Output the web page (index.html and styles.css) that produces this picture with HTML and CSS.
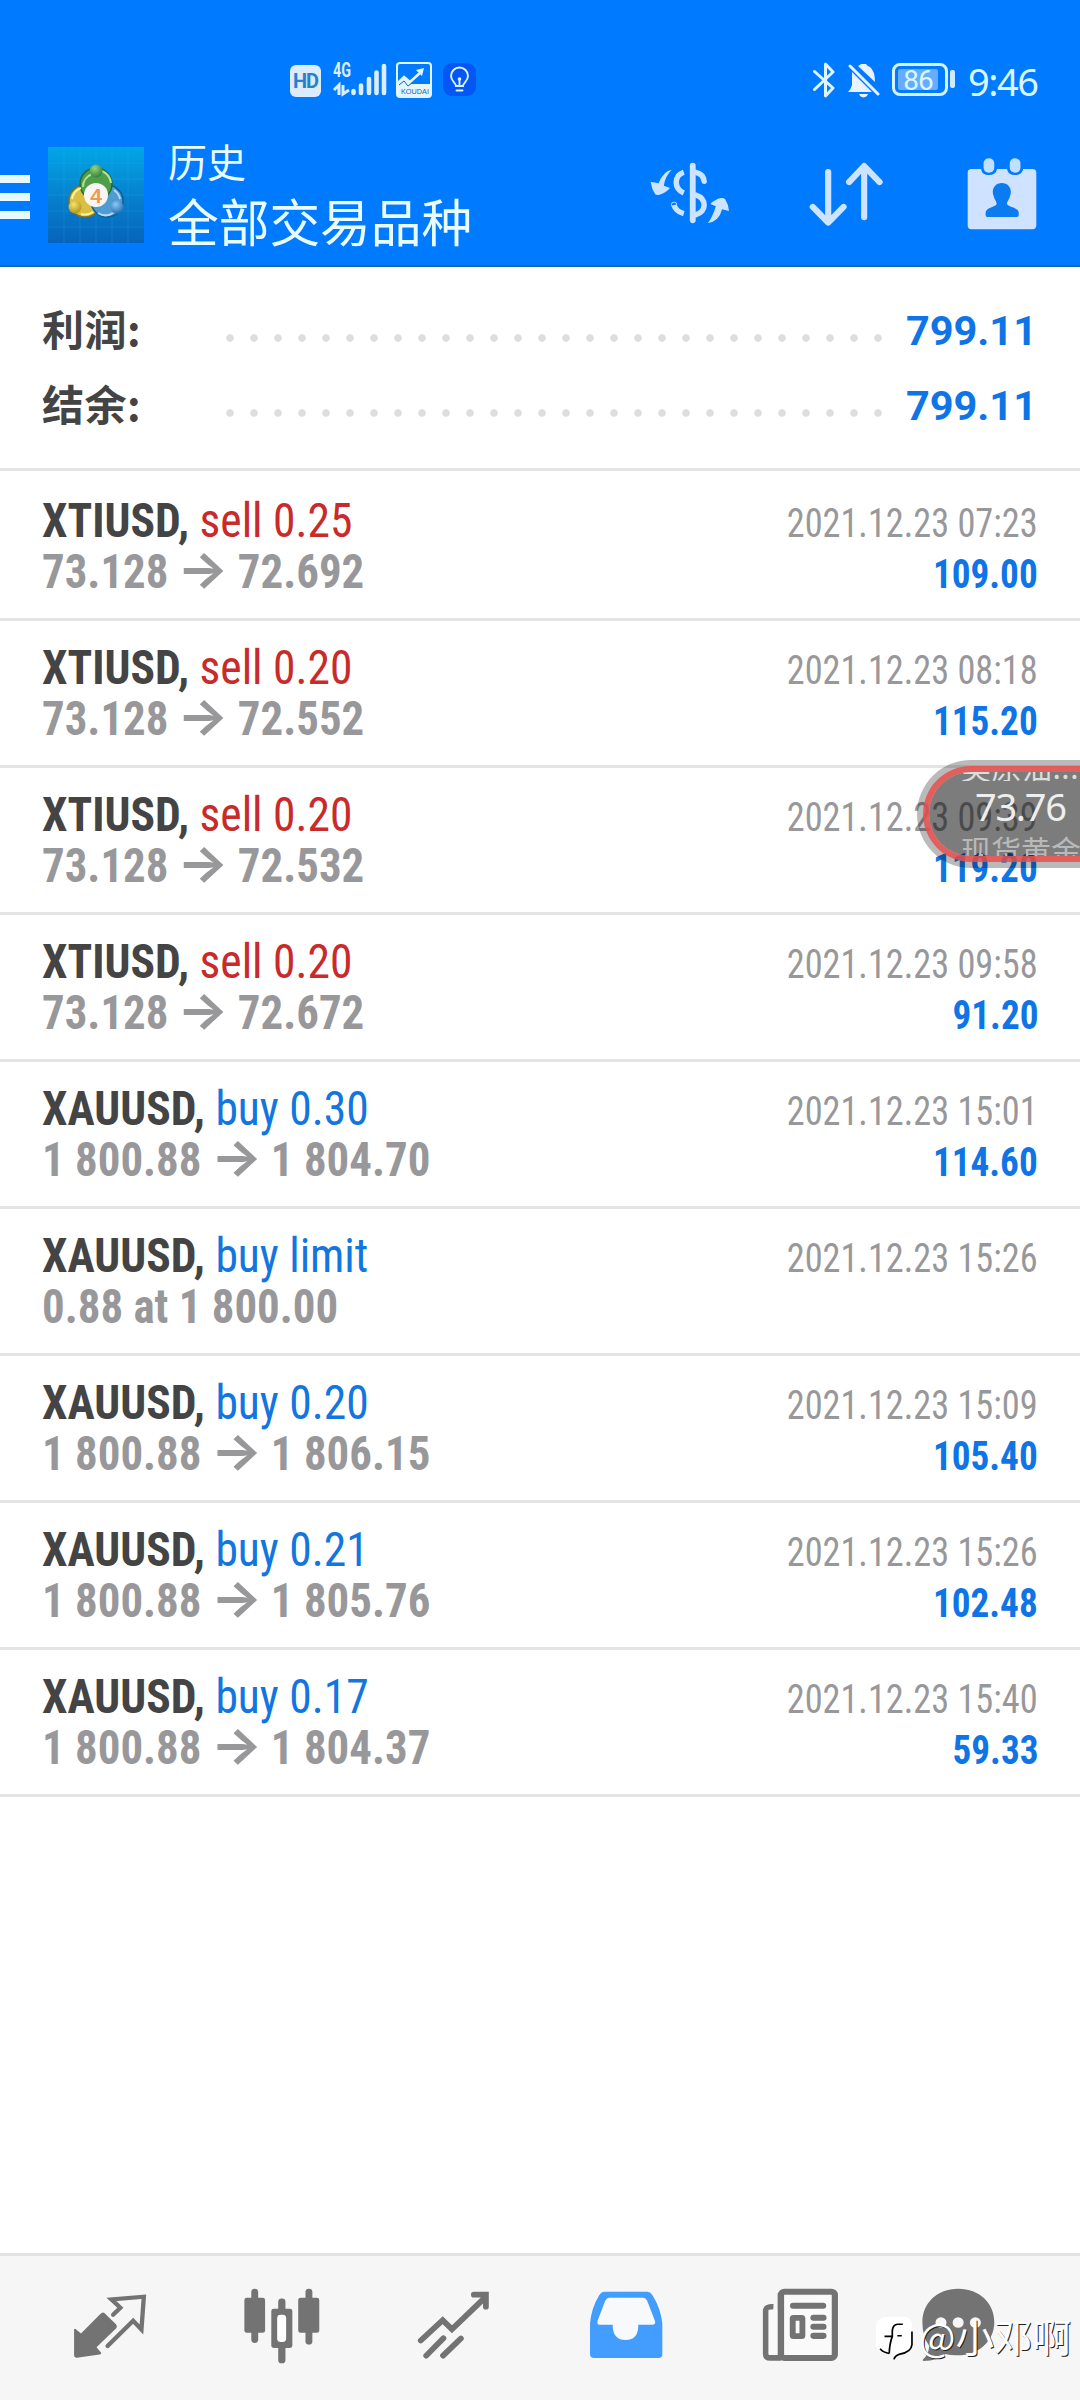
FILE: index.html
```html
<!DOCTYPE html>
<html lang="zh-CN">
<head>
<meta charset="utf-8">
<title>历史</title>
<link rel="stylesheet" href="styles.css">
</head>
<body>
<div class="screen">
  <header class="header">
    <div class="status">
      <div class="status-left">
        <span class="hd">HD</span>
        <svg class="signal" viewBox="0 0 54 34" width="54" height="34">
          <text x="0" y="15" textLength="18" lengthAdjust="spacingAndGlyphs" class="net">4G</text>
          <path d="M1 28 L6 23 V33 M10 23 V32 L16 28" fill="none" stroke="#d9efff" stroke-width="3"/>
          <path d="M20.5 29v2M28 23.500v7.500M36 17v14M43.500 10.500v20.500M51 4v27" stroke="#d9efff" stroke-width="4.600" stroke-linecap="round" fill="none"/>
        </svg>
        <svg class="koudai" viewBox="0 0 36 36" width="36" height="36">
          <rect x="1" y="1" width="34" height="34" rx="3" fill="none" stroke="#e3f6ff" stroke-width="2"/>
          <path d="M1 22 L8 15 L15 22 H35 V35 H1Z" fill="#e3f6ff"/>
          <path d="M2 21 L8 15 L14 20 L25 10" fill="none" stroke="#e3f6ff" stroke-width="2.600"/>
          <path d="M20 8 L28 6 L26 14Z" fill="#e3f6ff"/>
          <path d="M3 23 L8 19 L12 24 L16 21" fill="none" stroke="#0a66c8" stroke-width="1"/>
          <text x="5" y="32" textLength="28" lengthAdjust="spacingAndGlyphs" class="kd">KOUDAI</text>
        </svg>
        <svg class="bulb" viewBox="0 0 33 33" width="33" height="33">
          <rect width="33" height="33" rx="9" fill="#0457f5"/>
          <path d="M13 23c0-3-5-5-5-10a8.500 8.500 0 0 1 17 0c0 5-5 7-5 10zM13.500 27.500h6M16.500 22v-6" fill="none" stroke="#d9f4ff" stroke-width="1.900" stroke-linecap="round"/>
          <circle cx="16.500" cy="16" r="1.800" fill="#d9f4ff"/>
        </svg>
      </div>
      <div class="status-right">
        <svg viewBox="0 0 22 36" width="22" height="36" class="bt"><path d="M1.500 9.500 L20 26 L12.500 34 V2 L20 10 L1.500 27.500" fill="none" stroke="#dcf5ff" stroke-width="3" stroke-linejoin="round" stroke-linecap="round"/></svg>
        <svg viewBox="0 0 32 35" width="32" height="35" class="bell">
          <path d="M10 3 Q12 2 13 1 H18 Q19 3 22 4 Q27 8 27 19 Z M4 9 L24 29 H0 Q3 26 4 22Z M11 31 H20 Q19 34 15.500 34.500 Q12 34 11 31Z" fill="#e8f3ff"/>
          <path d="M2 3 L30 31" stroke="#e8f3ff" stroke-width="3" stroke-linecap="round"/>
        </svg>
        <div class="battery"><span>86</span></div>
        <i class="cap"></i>
        <span class="clock">9:46</span>
      </div>
    </div>
    <div class="appbar">
      <div class="menu"><i></i><i></i><i></i></div>
      <svg class="logo" viewBox="0 0 96 96" width="96" height="96">
        <defs>
          <linearGradient id="bg" x1="0" y1="0" x2="0" y2="1"><stop offset="0" stop-color="#02a6e8"/><stop offset=".5" stop-color="#0682cd"/><stop offset="1" stop-color="#0664ba"/></linearGradient>
          <radialGradient id="gr" cx=".4" cy=".3" r=".8"><stop offset="0" stop-color="#9bd37c"/><stop offset="1" stop-color="#1f7a34"/></radialGradient>
          <radialGradient id="ye" cx=".4" cy=".3" r=".8"><stop offset="0" stop-color="#f6e36b"/><stop offset="1" stop-color="#a98a14"/></radialGradient>
          <radialGradient id="bl" cx=".4" cy=".3" r=".8"><stop offset="0" stop-color="#8fc9f2"/><stop offset="1" stop-color="#1668ae"/></radialGradient>
        </defs>
        <rect width="96" height="96" fill="url(#bg)"/>
        <path d="M16 0v96M32 0v96M48 0v96M64 0v96M80 0v96M0 16h96M0 32h96M0 48h96M0 64h96M0 80h96" stroke="#35b6ee" stroke-opacity=".2" stroke-width="1"/>
        <circle cx="37" cy="54" r="16" fill="#d9c043" stroke="#7d7421" stroke-width="1.500"/>
        <circle cx="59" cy="54" r="16" fill="#4f9bd4" stroke="#0e5b96" stroke-width="1.500"/>
        <circle cx="48" cy="37" r="16" fill="#4f9e4a" stroke="#226a33" stroke-width="1.500"/>
        <path d="M35 40a14 14 0 0 1 9-13M63 36a15 15 0 0 0-9-12" fill="none" stroke="#b5e09a" stroke-width="2"/>
        <path d="M24 52a14 14 0 0 1 9-11M33 67a14 14 0 0 0 12-2" fill="none" stroke="#fbf2a4" stroke-width="2"/>
        <path d="M50 66a14 14 0 0 0 15 0M72 52a14 14 0 0 0-6-9" fill="none" stroke="#b4dcf8" stroke-width="2"/>
        <circle cx="48" cy="24" r="6.500" fill="url(#gr)"/>
        <circle cx="27" cy="60" r="6.500" fill="url(#ye)"/>
        <circle cx="69" cy="60" r="6.500" fill="url(#bl)"/>
        <circle cx="48" cy="48" r="12" fill="#f8f6f4"/>
        <text x="48" y="55.500" text-anchor="middle" class="four">4</text>
      </svg>
      <div class="titles">
        <div class="small-title">历史</div>
        <div class="big-title">全部交易品种</div>
      </div>
      <div class="actions">
        <svg class="dollar" viewBox="320 366 232 186" preserveAspectRatio="none" width="80" height="62">
          <g fill="none" stroke="#cce4ff" stroke-linecap="round">
            <path d="M444 377V541" stroke-width="17"/>
            <path d="M453 397Q475 402 477 424M453 465Q477 473 477 496Q476 516 453 524" stroke-width="16"/>
            <path d="M418 397Q396 404 396 428Q397 450 418 459M390 495Q394 514 418 521" stroke-width="16" stroke-linecap="butt"/>
            <circle cx="390" cy="494" r="1" stroke-width="15"/>
          </g>
          <path d="M383 390Q360 391 345 430Q334 427 322 426Q325 448 335 463Q340 466 347 464Q365 460 378 444L360 437Q364 408 383 390ZM488 549Q502 530 511 499L495 492Q508 478 526 474Q534 473 538 478Q548 494 549 513L529 508Q520 545 488 549Z" fill="#cce4ff"/>
        </svg>
        <svg class="sort" viewBox="780 366 216 194" preserveAspectRatio="none" width="74" height="65"><path d="M836 396V545M791 500L836 547L881 500M941 531V380M897 426L941 378L986 426" fill="none" stroke="#cce4ff" stroke-width="18" stroke-linecap="round" stroke-linejoin="round"/></svg>
        <svg class="calendar" viewBox="1240 354 203 216" preserveAspectRatio="none" width="70" height="72">
          <path d="M1253 387H1281Q1283 405 1303 405Q1324 405 1327 387H1356Q1359 405 1379 405Q1400 405 1403 387H1430Q1441 387 1441 398V556Q1441 568 1430 568H1253Q1242 568 1242 556V398Q1242 387 1253 387Z" fill="#cfe2ff"/>
          <rect x="1288" y="355" width="31" height="43" rx="15" fill="#bfe0ff"/><rect x="1364" y="355" width="31" height="43" rx="15" fill="#bfe0ff"/>
          <path d="M1341 429C1362 429 1372 450 1365 467C1362 480 1356 483 1356 492C1357 501 1390 501 1390 519V526Q1390 531 1384 531H1299Q1294 531 1294 526V519C1294 501 1326 501 1326 492C1326 483 1320 480 1317 467C1310 450 1320 429 1341 429Z" fill="#0b7bf2"/>
        </svg>
      </div>
    </div>
  </header>

  <section class="summary">
    <div class="sum-row"><span class="label">利润:</span><span class="dots"></span><span class="total">799.11</span></div>
    <div class="sum-row"><span class="label">结余:</span><span class="dots"></span><span class="total">799.11</span></div>
  </section>

  <main class="deals">
    <article class="deal"><div class="line"><span class="sym">XTIUSD, <b class="sell">sell 0.25</b></span><span class="date">2021.12.23 07:23</span></div><div class="line"><span class="price">73.128 <i class="arrow">→</i> 72.692</span><span class="profit">109.00</span></div></article>
    <article class="deal"><div class="line"><span class="sym">XTIUSD, <b class="sell">sell 0.20</b></span><span class="date">2021.12.23 08:18</span></div><div class="line"><span class="price">73.128 <i class="arrow">→</i> 72.552</span><span class="profit">115.20</span></div></article>
    <article class="deal"><div class="line"><span class="sym">XTIUSD, <b class="sell">sell 0.20</b></span><span class="date">2021.12.23 09:39</span></div><div class="line"><span class="price">73.128 <i class="arrow">→</i> 72.532</span><span class="profit">119.20</span></div></article>
    <article class="deal"><div class="line"><span class="sym">XTIUSD, <b class="sell">sell 0.20</b></span><span class="date">2021.12.23 09:58</span></div><div class="line"><span class="price">73.128 <i class="arrow">→</i> 72.672</span><span class="profit">91.20</span></div></article>
    <article class="deal"><div class="line"><span class="sym">XAUUSD, <b class="buy">buy 0.30</b></span><span class="date">2021.12.23 15:01</span></div><div class="line"><span class="price">1 800.88 <i class="arrow">→</i> 1 804.70</span><span class="profit">114.60</span></div></article>
    <article class="deal"><div class="line"><span class="sym">XAUUSD, <b class="buy">buy limit</b></span><span class="date">2021.12.23 15:26</span></div><div class="line"><span class="price">0.88 at 1 800.00</span></div></article>
    <article class="deal"><div class="line"><span class="sym">XAUUSD, <b class="buy">buy 0.20</b></span><span class="date">2021.12.23 15:09</span></div><div class="line"><span class="price">1 800.88 <i class="arrow">→</i> 1 806.15</span><span class="profit">105.40</span></div></article>
    <article class="deal"><div class="line"><span class="sym">XAUUSD, <b class="buy">buy 0.21</b></span><span class="date">2021.12.23 15:26</span></div><div class="line"><span class="price">1 800.88 <i class="arrow">→</i> 1 805.76</span><span class="profit">102.48</span></div></article>
    <article class="deal"><div class="line"><span class="sym">XAUUSD, <b class="buy">buy 0.17</b></span><span class="date">2021.12.23 15:40</span></div><div class="line"><span class="price">1 800.88 <i class="arrow">→</i> 1 804.37</span><span class="profit">59.33</span></div></article>
  </main>

  <nav class="tabs">
    <svg viewBox="210 145 220 230" preserveAspectRatio="none" width="76" height="77">
      <path d="M299 218Q303 218 306 222L338 254Q342 260 338 265L281 322L295 339Q294 343 290 344L224 353Q216 354 216 346V268Q218 265 223 270L236 281L292 223Q296 218 299 218Z" fill="#737373"/>
      <path d="M329 225L350 204L324 179L418 171L411 269L387 243L313 318" fill="none" stroke="#737373" stroke-width="12.500" stroke-linecap="round"/>
    </svg>
    <svg viewBox="705 145 226 230" preserveAspectRatio="none" width="78" height="77">
      <g fill="#737373"><rect x="709" y="174" width="60" height="105" rx="7"/><rect x="729" y="147" width="20" height="162" rx="10"/><rect x="865" y="174" width="61" height="105" rx="7"/><rect x="886" y="147" width="20" height="167" rx="10"/><rect x="787" y="207" width="61" height="117" rx="7"/><rect x="807" y="176" width="21" height="194" rx="10"/></g><rect x="804" y="225" width="26" height="81" rx="10" fill="#fff"/>
    </svg>
    <svg viewBox="1210 145 213 230" preserveAspectRatio="none" width="73" height="77">
      <path d="M1221 302L1285 241L1312 268L1409 173M1376 165H1411V201M1237 347L1287 295M1286 347L1338 296" fill="none" stroke="#737373" stroke-width="17" stroke-linecap="round"/>
    </svg>
    <svg viewBox="144 145 215 230" preserveAspectRatio="none" width="74" height="77">
      <path d="M190 156H314Q322 156 328 166Q352 205 357 250V344Q357 354 345 354H159Q147 354 147 344V250Q151 205 174 166Q180 156 190 156Z" fill="#429dff"/>
      <path d="M203 174H301Q309 174 313 183L336 244Q338 254 328 255H287V262Q285 300 250 300Q216 300 213 262V255H175Q166 255 169 243L191 183Q195 174 203 174Z" fill="#f7f9fb"/>
    </svg>
    <svg viewBox="644 145 223 230" preserveAspectRatio="none" width="77" height="77">
      <rect x="699" y="156" width="156" height="198" rx="10" fill="#fafafa" stroke="#737373" stroke-width="18"/>
      <path d="M677 201Q655 200 655 214V342Q655 354 668 354H700" fill="none" stroke="#737373" stroke-width="17"/><rect x="663" y="210" width="27" height="134" fill="#fafafa"/>
      <path d="M734 198H821M793 234H822M793 261H822M793 288H822" fill="none" stroke="#737373" stroke-width="18" stroke-linecap="round"/>
      <rect x="733" y="234" width="28" height="55" rx="2" fill="#fafafa" stroke="#737373" stroke-width="17"/>
      <path d="M698 160V350" stroke="#737373" stroke-width="17"/>
    </svg>
    <svg viewBox="1105 145 215 230" preserveAspectRatio="none" width="74" height="77">
      <path d="M1213 147C1275 147 1318 190 1318 247C1318 305 1270 346 1213 346C1200 346 1190 345 1176 342Q1155 362 1112 363Q1107 361 1114 355Q1127 342 1129 318Q1109 290 1109 247C1109 190 1152 147 1213 147Z" fill="#737373"/>
      <g fill="#f6f6f6"><circle cx="1163" cy="248" r="16"/><circle cx="1213" cy="248" r="16"/><circle cx="1263" cy="248" r="16"/></g>
    </svg>
  </nav>

  <aside class="ticker">
    <div class="ticker-in">
      <div class="t-name top">美原油...</div>
      <div class="t-price">73.76</div>
      <div class="t-name">现货黄金</div>
    </div>
  </aside>

  <div class="mark">
    <svg viewBox="975 235 115 140" preserveAspectRatio="none" width="39" height="46">
      <path d="M1015 240H1060Q1085 242 1085 270V320Q1083 348 1050 354L1031 370L1030 354Q980 355 978 325V270Q980 240 1015 240Z" fill="#fff"/>
      <path d="M1057 263H1042Q1027 264 1026 284V300H1003M1026 300Q1018 322 1017 352M1017 352Q1000 350 990 338M1041 298H1054M1084 285V325Q1082 348 1048 354Q1034 358 1031 370" fill="none" stroke="#000" stroke-width="5"/>
    </svg>
    <span>@小邓啊</span>
  </div>
</div>
</body>
</html>
```
FILE: styles.css
```css
* { box-sizing: border-box; }
body { margin: 0; background: #fff; }
.screen {
  position: relative;
  width: 1080px;
  height: 2400px;
  overflow: hidden;
  display: flex;
  flex-direction: column;
  background: #fff;
  font-family: Roboto, "Noto Sans CJK SC", sans-serif;
}
svg { display: block; flex: none; }

.header { height: 267px; background: #007aff; border-bottom: 2px solid #1766b4; }
.status { height: 120px; padding: 62px 43px 0 290px; display: flex; justify-content: space-between; }
.status-left, .status-right { display: flex; align-items: flex-start; }
.hd {
  width: 31px; height: 32px; margin: 3px 12px 0 0; border-radius: 6px;
  background: #dcecff; color: #2a7fd0; text-align: center;
  font: bold 20px/33px Roboto, sans-serif; letter-spacing: -1px;
}
.signal { margin-right: 9px; overflow: visible; }
.net { font: bold 20px Roboto, sans-serif; fill: #d9efff; }
.koudai { margin-right: 11px; }
.kd { font: 8px "Liberation Sans", sans-serif; fill: #1668b0; }
.bulb { margin-top: 1px; }
.bt { margin-right: 13px; }
.bell { margin: 1px 12px 0 0; }
.battery {
  width: 56px; height: 33px; margin-top: 1px; padding: 3px;
  border: 3px solid #d5f3ff; border-radius: 8px;
}
.battery span {
  display: block; width: 40px; height: 21px; background: #67acff; color: #d9f7ff;
  font: 28px/23px Roboto, sans-serif; text-align: center; letter-spacing: -1px; border-radius: 2px;
}
.cap { width: 5px; height: 18px; margin: 8px 13px 0 2px; border-radius: 2px; background: #cfeaff; }
.clock { color: #d9f5ff; font: 38px/38px "Noto Sans", sans-serif; width: 69px; white-space: nowrap; letter-spacing: -1.500px; }

.appbar { height: 145px; display: flex; align-items: flex-start; }
.menu { width: 30px; margin: 55px 18px 0 0; display: flex; flex-direction: column; gap: 10px; }
.menu i { height: 8px; background: #e5faff; }
.logo { margin-top: 27px; }
.four { font: bold 21px "Liberation Sans", sans-serif; fill: #ef9a4c; }
.titles { margin-left: 24px; color: #e8fbff; font-family: "Noto Sans CJK SC", sans-serif; }
.small-title { margin-top: 11px; font-size: 39px; line-height: 58px; }
.big-title { font-size: 50.700px; line-height: 62px; white-space: nowrap; }
.actions { margin: 38px 43px 0 auto; display: flex; }
.dollar { margin: 4px 79px 0 0; }
.sort { margin: 4px 84px 0 0; }

.summary { height: 204px; padding: 26px 43px 0 42px; border-bottom: 3px solid #e4e4e4; }
.sum-row { height: 75px; display: flex; align-items: center; }
.label { width: 176px; margin-top: -6px; color: #444; font: bold 42px/75px "Noto Sans CJK SC", sans-serif; letter-spacing: .5px; }
.dots {
  width: 672px; height: 24px; margin-top: 15px;
  background: radial-gradient(circle at 12px 12px, #ddd 3.300px, transparent 4.300px) 0 0 / 24px 24px repeat-x;
}
.total { margin-left: auto; color: #0f75e6; font: bold 41.500px/75px Roboto, sans-serif; }

.deals { flex: 1; }
.deal { height: 147px; padding: 21px 42px 0; border-bottom: 3px solid #e4e4e4; }
.deal:first-child { height: 150px; padding-top: 24px; }
.line { height: 51px; display: flex; justify-content: space-between; align-items: baseline; line-height: 51px; font-stretch: 75%; white-space: pre; }
.sym, .price { font-size: 48px; font-weight: 700; transform-origin: left; }
.sym { color: #444; transform: scaleX(.948); }
.sym b { font-weight: 400; }
.sell { color: #c92a2a; }
.buy { color: #1275e0; }
.price { color: #98989b; transform: scaleX(.935); }
.arrow { display: inline-block; margin: 0 6px; font: 700 42px/40px Inter, sans-serif; transform: translateY(-4px) scale(1.38, 1.2); }
.date, .profit { font-size: 40px; transform-origin: right; }
.date { color: #98989b; transform: scaleX(.907); }
.profit { color: #0f75e6; font-weight: 700; transform: scaleX(.93); }

.tabs {
  height: 147px; padding: 32px 0 0 23px; background: #f6f6f6; border-top: 3px solid #e3e3e3;
  display: grid; grid-template-columns: 173px 171px 172px 173px 176px 140px; justify-items: center; align-items: start;
}

.ticker {
  position: absolute; left: 917px; top: 760px; width: 220px; height: 108px;
  padding: 6px; border-radius: 54px; background: rgba(0, 0, 0, .27);
}
.ticker-in {
  height: 96px; border: 6px solid rgba(232, 80, 76, .85); border-radius: 48px; overflow: hidden;
  background: rgba(0, 0, 0, .33); background-clip: padding-box; padding-left: 32px;
  font-family: "Noto Sans CJK SC", sans-serif;
}
.t-name { height: 24px; margin-top: 3px; font-size: 30px; line-height: 30px; color: #b9b9b9; white-space: nowrap; }
.t-name.top { height: 9px; margin-top: 0; line-height: 30px; display: flex; align-items: flex-end; overflow: hidden; color: #ddd; letter-spacing: .5px; }
.t-price { height: 50px; padding-left: 14px; font: 38px/50px "Noto Sans", sans-serif; letter-spacing: -1.300px; color: #eee; }

.mark { position: absolute; left: 875px; top: 2315px; display: flex; align-items: flex-start; gap: 5px; }
.mark span { color: #fff; font: 400 38.500px/40px "Noto Sans CJK SC", sans-serif; text-shadow: 1px 1px 0 #222; white-space: nowrap; }
```
